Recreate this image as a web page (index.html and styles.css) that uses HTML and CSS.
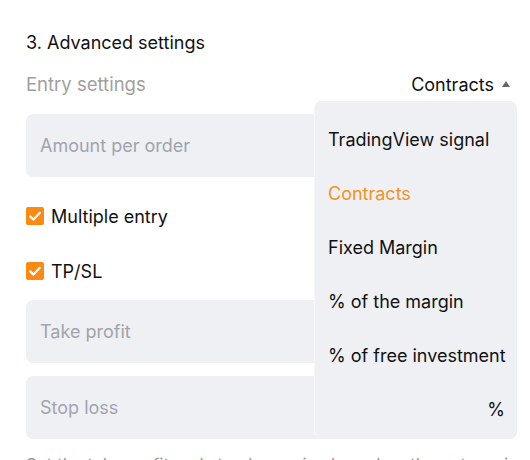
FILE: index.html
```html
<!DOCTYPE html>
<html>
<head>
<meta charset="utf-8">
<link rel="stylesheet" href="styles.css">
</head>
<body>
<div class="panel">
  <div class="title">3. Advanced settings</div>
  <div class="entry-row">
    <span class="entry-label">Entry settings</span>
    <span class="entry-select">Contracts <span class="caret"></span></span>
  </div>
  <div class="field">Amount per order</div>
  <div class="check-row multi">
    <span class="checkbox"><svg viewBox="0 0 18 18" width="18" height="18"><path d="M4.2 9.4 L7.6 12.6 L13.8 5.8" fill="none" stroke="#fff" stroke-width="2.2" stroke-linecap="round" stroke-linejoin="round"/></svg></span>
    <span class="check-label">Multiple entry</span>
  </div>
  <div class="check-row tpsl">
    <span class="checkbox"><svg viewBox="0 0 18 18" width="18" height="18"><path d="M4.2 9.4 L7.6 12.6 L13.8 5.8" fill="none" stroke="#fff" stroke-width="2.2" stroke-linecap="round" stroke-linejoin="round"/></svg></span>
    <span class="check-label">TP/SL</span>
  </div>
  <div class="field tp">Take profit</div>
  <div class="field sl">Stop loss</div>
  <p class="hint">Set the take profit and stop loss price based on the entry price</p>

  <ul class="menu">
    <li class="item">TradingView signal</li>
    <li class="item active">Contracts</li>
    <li class="item">Fixed Margin</li>
    <li class="item">% of the margin</li>
    <li class="item">% of free investment</li>
    <li class="item right">%</li>
  </ul>
</div>
</body>
</html>
```
FILE: styles.css
```css
* { box-sizing: border-box; }
html, body { margin: 0; padding: 0; background: #fff; }
body {
  font-family: Inter, "Noto Sans", "Liberation Sans", sans-serif;
  color: #111;
  width: 530px;
  height: 460px;
  overflow: hidden;
}
.panel {
  position: relative;
  padding: 33px 20px 0 26px;
}
.title {
  font-size: 18px;
  line-height: 20px;
  color: #111;
}
.entry-row {
  display: flex;
  justify-content: space-between;
  align-items: center;
  margin-top: 21px;
  height: 20px;
  font-size: 18px;
}
.entry-label { color: #a0a0a0; font-size: 18.5px; }
.entry-select { display: flex; align-items: center; gap: 8px; color: #111; }
.caret {
  width: 0; height: 0;
  border-left: 4.5px solid transparent;
  border-right: 4.5px solid transparent;
  border-bottom: 6px solid #666;
}
.field {
  height: 63px;
  margin-top: 20px;
  border-radius: 7px;
  background: #eff0f4;
  display: flex;
  align-items: center;
  padding-left: 14px;
  font-size: 18px;
  color: #a0a4ad;
  margin-right: -7px;
}
.check-row {
  display: flex;
  align-items: center;
  gap: 7px;
  height: 20px;
  font-size: 18px;
}
.multi { margin-top: 29px; }
.tpsl { margin-top: 35px; }
.checkbox {
  width: 18px; height: 18px;
  background: #fb8a13;
  border-radius: 2px;
  display: flex;
}
.check-label { color: #111; }
.tp { margin-top: 19px; }
.sl { margin-top: 13px; }
.hint {
  margin: 15px 0 0;
  font-size: 17px;
  line-height: 22px;
  color: #999;
  white-space: nowrap;
}
.menu {
  position: absolute;
  left: 314px;
  top: 101px;
  width: 203px;
  height: 337px;
  margin: 0;
  padding: 11px 12px 0 13px;
  list-style: none;
  background: #eff0f4;
  border-radius: 7px;
  border-left: 1px solid #f7f7f9;
}
.item {
  height: 54px;
  display: flex;
  align-items: center;
  font-size: 18px;
  color: #111;
  white-space: nowrap;
}
.item.active { color: #f39323; }
.item.right { justify-content: flex-end; }
```
